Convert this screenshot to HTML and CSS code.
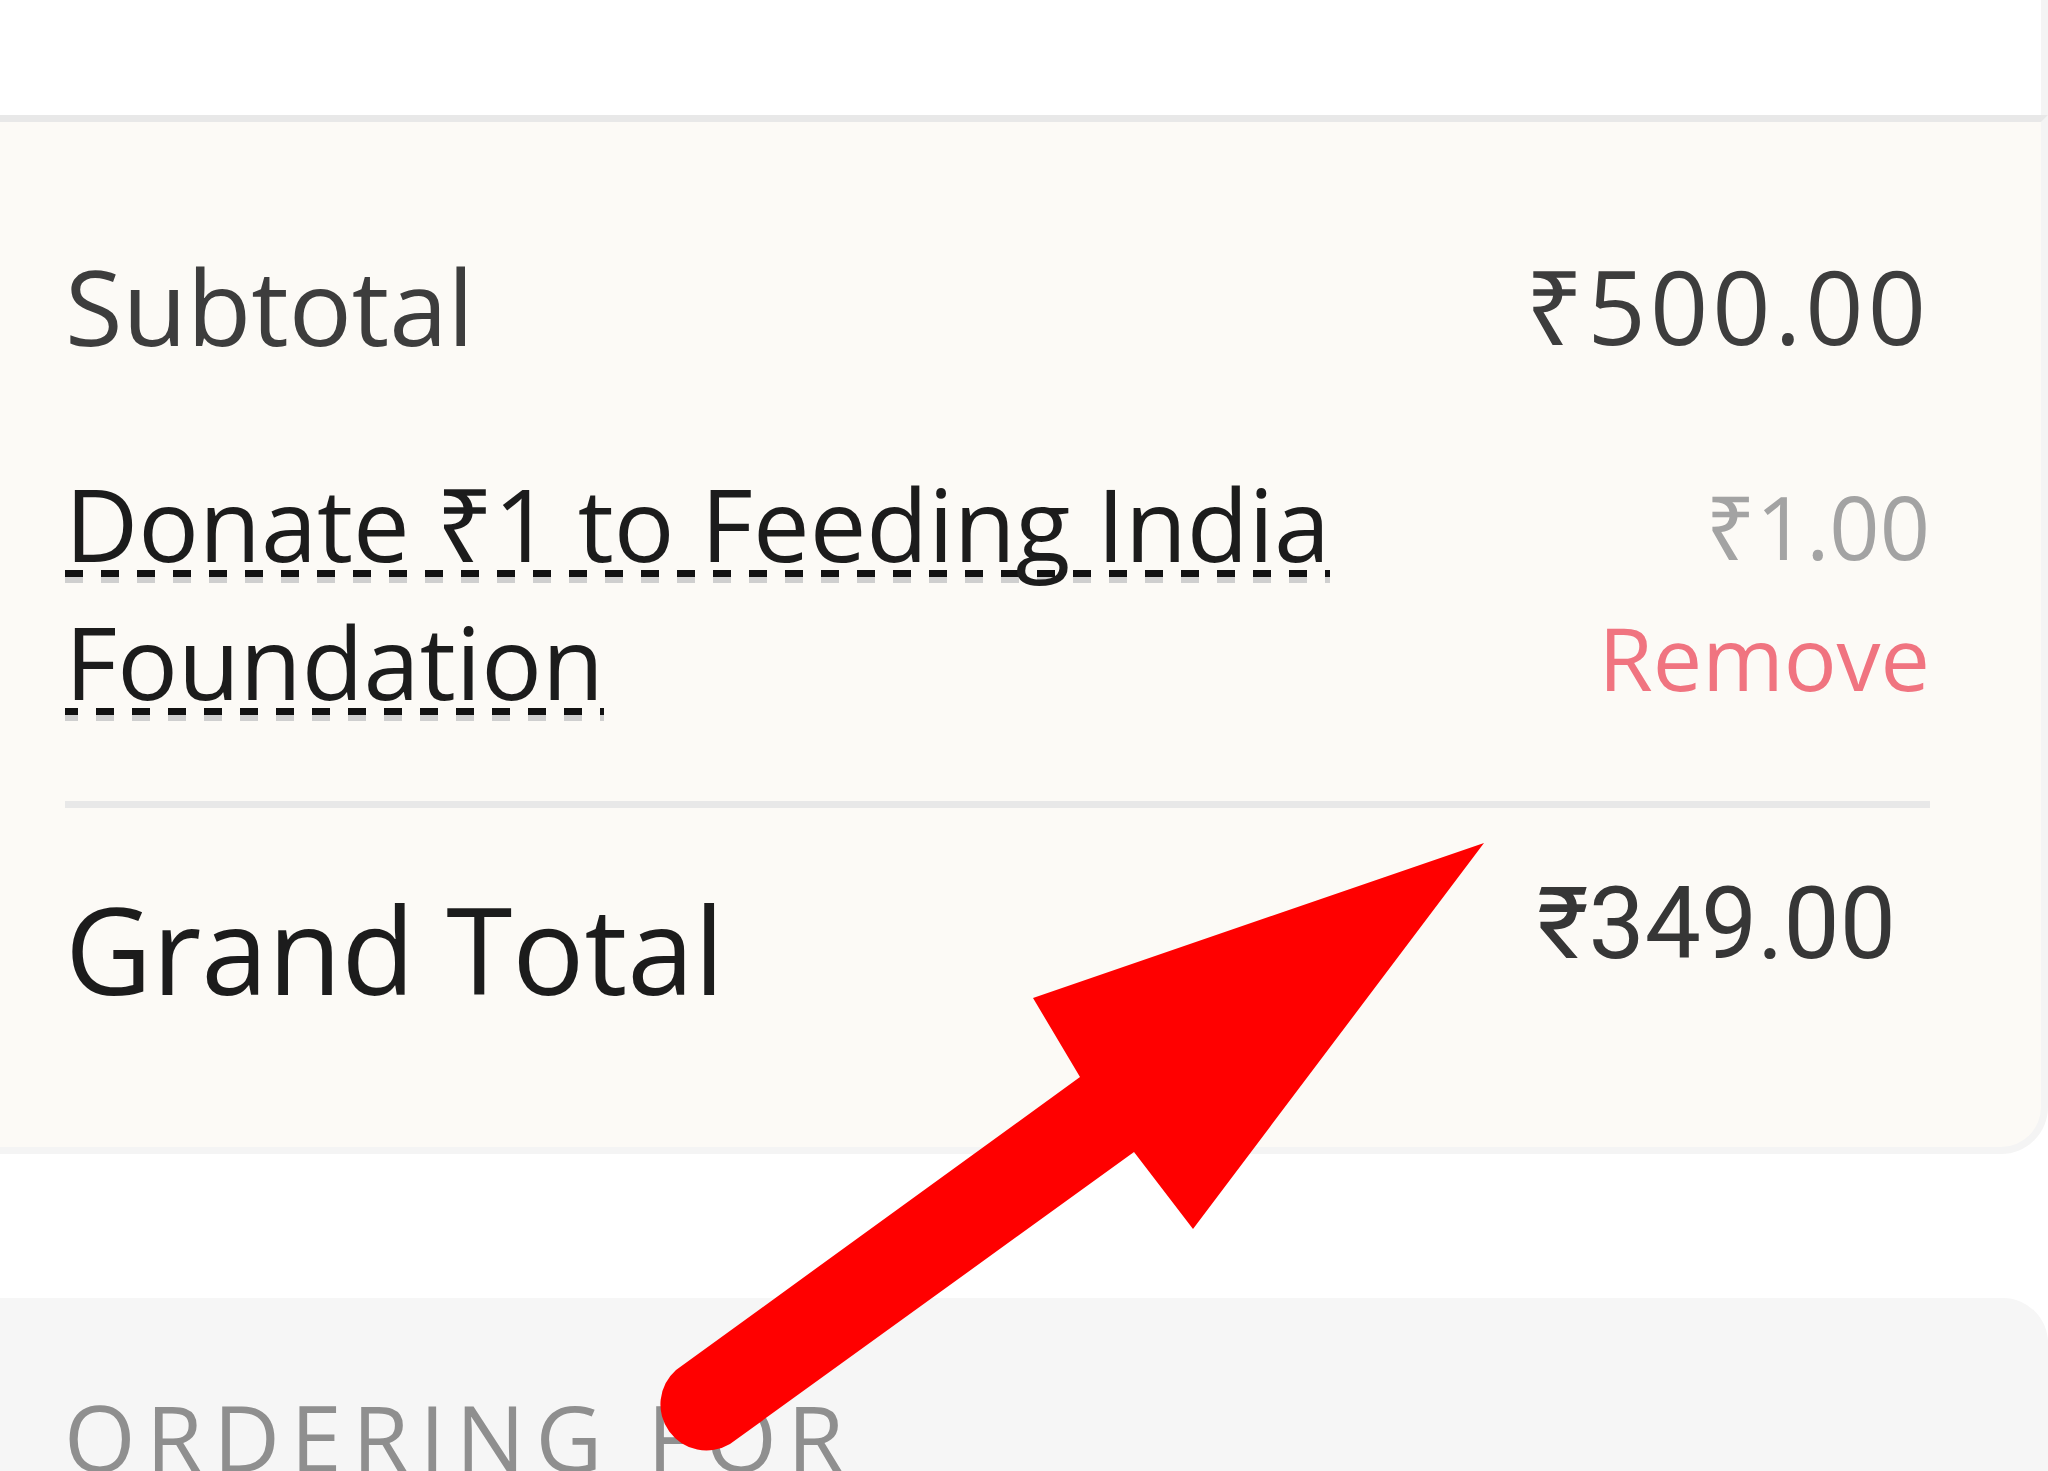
FILE: index.html
```html
<!DOCTYPE html>
<html lang="en">
<head>
  <meta charset="UTF-8">
  <meta name="viewport" content="width=device-width, initial-scale=1.0">
  <title>Bill Details</title>
  <link rel="stylesheet" href="styles.css">
</head>
<body>
  <div class="cart">
    <div class="cart-top"></div>
    <div class="bill">
      <div class="bill-row subtotal">
        <span class="bill-label">Subtotal</span>
        <span class="bill-amount">₹500.00</span>
      </div>
      <div class="bill-row donate">
        <span class="donate-label"><span class="dotted">Donate ₹1 to Feeding India Foundation</span></span>
        <div class="donate-value">
          <span class="donate-fee">₹1.00</span>
          <span class="remove">Remove</span>
        </div>
      </div>
      <div class="bill-divider"></div>
      <div class="bill-row total">
        <span class="total-label">Grand Total</span>
        <span class="total-amount">₹349.00</span>
      </div>
    </div>
  </div>

  <section class="ordering">
    <h3 class="ordering-title">ORDERING FOR</h3>
  </section>

  <svg class="annotation" viewBox="0 0 2048 1471" width="2048" height="1471">
    <path d="M1484 843 L1193 1229 L1134 1152 L730 1444 A46 46 0 0 1 676 1370 L1080 1077 L1033 998 Z" fill="#ff0000"/>
  </svg>
</body>
</html>
```

FILE: styles.css
```css
* {
  box-sizing: border-box;
}
html, body {
  margin: 0;
  padding: 0;
}
body {
  font-family: "Open Sans", "Noto Sans", sans-serif;
  background-color: #ffffff;
  width: 2048px;
  height: 1471px;
  overflow: hidden;
  position: relative;
}
.cart-top {
  height: 115px;
  border-right: 7px solid #f4f4f4;
}
.bill {
  background-color: #fcfaf6;
  border-top: 7px solid #e8e8e8;
  border-right: 7px solid #f4f4f4;
  border-bottom: 7px solid #f4f4f4;
  border-bottom-right-radius: 47px;
  padding: 115px 111px 128px 65px;
}
.bill-row {
  display: flex;
  justify-content: space-between;
  align-items: flex-start;
}
.subtotal {
  font-size: 105px;
  line-height: 138px;
  color: #3d3d3d;
}
.bill-amount {
  font-size: 102px;
  letter-spacing: 4px;
}
.donate {
  margin-top: 79px;
}
.donate-label {
  font-size: 101px;
  line-height: 138px;
  color: #1c1c1c;
  max-width: 1400px;
}
.dotted {
  background-image:
    linear-gradient(to right, #111 50%, transparent 50%),
    linear-gradient(to right, #cfcfcf 50%, transparent 50%);
  background-size: 36px 7px, 36px 13px;
  background-repeat: repeat-x;
  background-position: 0 calc(100% - 15px), 0 calc(100% - 9px);
}
.donate-value {
  display: flex;
  flex-direction: column;
  align-items: flex-end;
  font-size: 88px;
  line-height: 131px;
  padding-top: 7px;
}
.donate-fee {
  color: #a3a3a3;
}
.remove {
  color: #f07480;
  cursor: pointer;
}
.bill-divider {
  height: 7px;
  background-color: #e8e8e8;
  margin-top: 71px;
}
.total {
  margin-top: 71px;
}
.total-label {
  font-size: 120px;
  font-weight: 500;
  line-height: 140px;
  color: #1c1c1c;
}
.total-amount {
  font-family: Roboto, "Noto Sans", sans-serif;
  font-size: 100px;
  line-height: 90px;
  color: #363636;
  margin-right: 34px;
}
.ordering {
  margin-top: 144px;
  background-color: #f6f6f6;
  border-top-right-radius: 45px;
  height: 200px;
  padding: 93px 0 0 64px;
}
.ordering-title {
  margin: 0;
  font-size: 92px;
  font-weight: 400;
  line-height: 92px;
  letter-spacing: 10.5px;
  color: #8f8f8f;
}
.annotation {
  position: absolute;
  top: 0;
  left: 0;
  pointer-events: none;
}
```
